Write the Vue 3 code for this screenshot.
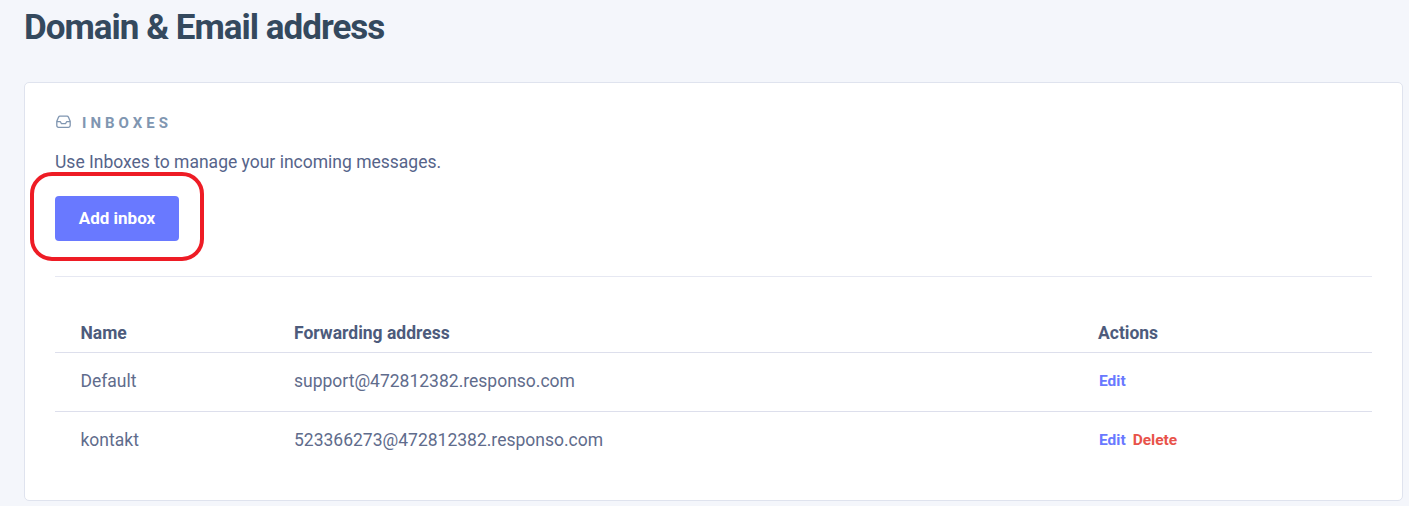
<script setup>
const inboxes = [
  { name: 'Default', address: 'support@472812382.responso.com', canDelete: false },
  { name: 'kontakt', address: '523366273@472812382.responso.com', canDelete: true },
]
</script>

<template>
  <main class="page">
    <h1 class="title">Domain &amp; Email address</h1>
    <section class="card">
      <h2 class="card-head">
        <svg class="inbox-icon" width="15" height="14" viewBox="0 0 15 14" fill="none" stroke="currentColor" stroke-width="1.3" stroke-linejoin="round">
          <path d="M4 1.2h7c.6 0 1.1.3 1.4.9l1.8 4.2v4.2c0 1-.7 1.8-1.7 1.8h-10c-1 0-1.7-.8-1.7-1.8V6.300l1.800-4.200c.3-.6.8-.9 1.400-.9z" />
          <path d="M1 6.700h3.400l1.100 2h4l1.100-2H14" />
        </svg>
        <span>INBOXES</span>
      </h2>
      <p class="intro">Use Inboxes to manage your incoming messages.</p>
      <div class="action-row">
        <button class="add-btn">Add inbox</button>
        <div class="callout"></div>
      </div>
      <table class="inbox-table">
        <thead>
          <tr>
            <th class="col-name">Name</th>
            <th class="col-address">Forwarding address</th>
            <th>Actions</th>
          </tr>
        </thead>
        <tbody>
          <tr v-for="inbox in inboxes" :key="inbox.name">
            <td>{{ inbox.name }}</td>
            <td>{{ inbox.address }}</td>
            <td class="actions">
              <a class="edit">Edit</a>
              <a v-if="inbox.canDelete" class="delete">Delete</a>
            </td>
          </tr>
        </tbody>
      </table>
    </section>
  </main>
</template>

<style>
html,
body {
  margin: 0;
  background: #f4f6fb;
}
</style>

<style scoped>
.page {
  height: 506px;
  box-sizing: border-box;
  padding: 0 6px 0 24px;
  overflow: hidden;
  font-family: Roboto, "Liberation Sans", sans-serif;
  color: #47536f;
}

.title {
  margin: 0;
  padding-top: 9px;
  height: 82px;
  box-sizing: border-box;
  font-size: 35px;
  line-height: 38px;
  font-weight: 700;
  letter-spacing: -1px;
  color: #34495e;
}

.card {
  height: 419px;
  box-sizing: border-box;
  padding: 29px 30px;
  background: #fff;
  border: 1px solid #dfe3ee;
  border-radius: 5px;
}

.card-head {
  display: flex;
  align-items: center;
  gap: 11px;
  margin: 0;
  height: 20px;
  font-size: 15px;
  line-height: 22px;
  font-weight: 700;
  letter-spacing: 4px;
  color: #8096b1;
}

.card-head span {
  padding-top: 1px;
}

.inbox-icon {
  margin-left: 1px;
}

.intro {
  margin: 20px 0 0;
  font-size: 17.5px;
  line-height: 20px;
  color: #56648a;
}

.action-row {
  position: relative;
  margin-top: 24px;
  padding-bottom: 35px;
  border-bottom: 1px solid #e6e8f2;
}

.add-btn {
  display: block;
  width: 124px;
  height: 45px;
  padding: 0 0 2px;
  border: 0;
  border-radius: 4px;
  background: #6979ff;
  color: #fff;
  font-family: inherit;
  font-size: 17px;
  font-weight: 700;
}

.callout {
  position: absolute;
  left: -25px;
  top: -24px;
  width: 166px;
  height: 81px;
  border: 4px solid #ee1c25;
  border-radius: 22px;
}

.inbox-table {
  width: 100%;
  margin-top: 36px;
  border-collapse: collapse;
  table-layout: fixed;
  font-size: 17.5px;
}

.col-name {
  width: 213px;
}

.col-address {
  width: 804px;
}

th {
  height: 39px;
  padding: 2px 0 0 26px;
  text-align: left;
  font-weight: 700;
  color: #4d5b7c;
  border-bottom: 1px solid #dddfec;
  box-sizing: border-box;
}

th:first-child,
td:first-child {
  padding-left: 25.5px;
}

td {
  height: 59px;
  padding: 0 0 2px 26px;
  box-sizing: border-box;
  color: #5f6c8c;
}

tbody tr:first-child td {
  border-bottom: 1px solid #dddfec;
}

.actions {
  font-size: 15.5px;
  font-weight: 700;
}

.edit {
  color: #6979ff;
  margin-left: 1px;
}

.delete {
  margin-left: 7px;
  color: #e8534a;
}
</style>
